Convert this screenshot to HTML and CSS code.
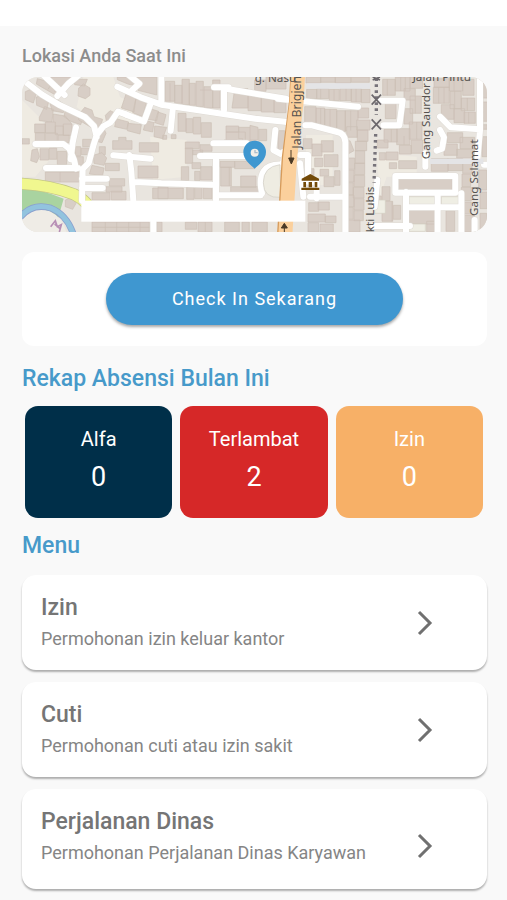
FILE: index.html
```html
<!DOCTYPE html>
<html lang="id">
<head>
  <meta charset="UTF-8">
  <meta name="viewport" content="width=device-width, initial-scale=1.0">
  <title>Absensi</title>
  <link rel="stylesheet" href="styles.css">
</head>
<body>
  <main class="page">
    <h2 class="location-title">Lokasi Anda Saat Ini</h2>

    <svg class="map" viewBox="66 171 1395 465" preserveAspectRatio="xMidYMid slice" role="img" aria-label="Peta lokasi">
      <rect class="land" x="66" y="171" width="1395" height="465"/>

      <!-- residential area and courtyards -->
      <path class="residential" d="M66 171H1461V636H66z"/>
      <path class="yard" d="M250 171h90l20 60 60 30-40 60-90-10-60-50zM450 350l110 10v110l-100 10zM66 240l60 60 40 100-60 70H66zM918 345h80v150h-80zM1130 400l120 10v60h-90l-20 60z"/>
      <path class="park" d="M66 508q60 0 125 28l-20 70-60-30-45 20z"/>

      <!-- buildings, west part -->
      <path class="building" d="M112 176l30 8 45 32-12 14-66-38zM152 171h60l-18 40-36-18zM236 204l14-12 20 12v22l-14 10-22-8zM222 178h40l-8 20-30-4z"/>
      <path class="building" d="M76 215l18-8 14 16-8 26-24-10zM108 232l20-8 20 14-8 30-30-12zM150 250l22-10 22 14-4 24-34-6zM196 268l28 6 26 18-8 22-30-10-20-14zM118 292l16-32 26 8-4 38-38-4zM160 282l36 6 18 22-10 22-44-16z"/>
      <path class="building" d="M104 312h32v26h-32zM136 306h30v32h-30zM166 318h24v26h-24zM190 312h26v34h-26zM106 338h28v28h-28zM136 340h36v26h-36zM174 346h34v22h-34zM66 356h22v16h-22zM96 390l16-4 6 24-8 18-18-6zM120 386h26v34h-26zM148 384h22v34h-22zM172 394h28v40h-28z"/>
      <path class="building" d="M236 284l18-22 22 8 6 20 26 8-8 24-20 4-44-26zM316 286l14-14 14 6-8 24-16 8zM226 380h16v28h-16zM224 410h26v26h-26zM248 358h28v22h-28zM244 384h22v20h-22zM290 330l20-8 8 18-12 28-18-4zM298 380h18v24h-18z"/>
      <path class="building" d="M338 362h18v-10h22v10h18v26h-58zM418 368h58v28h-58zM414 438h60v36h-60zM280 406l26-8 14 16-8 22-30-6zM276 436l36 8-4 22-40-4zM316 430h42v22h-42zM328 476h46v22h-46zM136 456h104v30H136zM318 500h48v16h-48zM276 518h54v22h-54zM334 514h44v26h-44z"/>
      <path class="building" d="M352 171h56v26l-22-4-34-14zM412 171h58v54l-56-14zM378 222l30 10-6 44-38-12zM408 236l32 8-12 46-30-12zM348 296l38 10-6 22-36-8zM384 310l40 4-4 28-38-10zM450 266l26 8-6 28-28-4zM474 276l24 8-8 32-26-8zM438 302l24 6-4 28-28-6zM464 318l36 4-12 34-26-6zM488 346h12v12h-12zM514 344h14v12h-14z"/>
      <path class="building" d="M496 184h28v60h-28zM524 196h22v54h-22zM546 178h22v76h-22zM568 190h18v66h-18zM588 184h22v76h-22zM612 200h26v64h-26zM638 180h22v84h-22z"/>
      <path class="building" d="M534 280h24v54h-24zM558 296h20v42h-20zM580 292h22v50h-22zM604 308h30v44h-30zM556 366h42v20h-42zM556 384h22v46h-22zM600 374h36v20h-36zM578 390h30v14h-30z"/>
      <path class="building" d="M704 206h40v58h-48zM744 212h40v60h-40zM784 224h38v52h-38zM822 230h36v48h-36zM678 318h38v18h-38zM678 336h58v28h-58zM716 322h52v54h-40v-20h-12zM672 360h40v14h-40z"/>
      <path class="building" d="M544 440h22v42h-22zM576 428h26v18h-26zM602 440h34v40h-34zM584 454h16v28h-16zM660 424h44v18h-44zM662 442h32v56h-32zM704 424h60v22h-60zM722 468h46v34h-46zM692 500h90v24h-90z"/>
      <path class="building" d="M458 504h92v32h-92zM474 500h30v36h-30zM560 500h22v38h-22zM584 502h22v34h-22zM610 504h26v32h-26zM196 540l20-8 12 18-10 18-22-8zM276 606h172v30H276zM470 606h16v30h-16zM556 606h34v22h-34zM594 606h42v30h-42zM674 606h44v30h-44zM726 606h22v30h-22zM756 606h46v30h-46z"/>
      <path class="building-line" d="M316 606v30M350 606v30M386 606v30M420 606v30M276 622h172M616 606v30M158 186l-14 22M176 192l-12 24M180 456v30M510 190v54M688 442v56M600 210h56"/>

      <!-- buildings, east part -->
      <g transform="translate(750 0)">
        <path class="building" d="M48 171h60v36H48zM14 180h34v34H14zM168 171h44v18h-44zM212 171h44v16h-44zM256 171h46v18h-46zM304 171h54v16h-54zM170 208h30v28h-30zM200 206h36v30h-36zM238 208h30v34h-30zM270 206h34v36h-34zM304 206h30v40h-30zM334 208h26v40h-26z"/>
        <path class="building" d="M164 260h34v60h-34zM198 264h26v56h-26zM224 268h36v58h-36zM260 272h26v64h-26zM286 272h38v60h-38zM324 264h32v30h-32zM0 316l24 6v38H0zM26 328h24v34H26zM84 332h20v60H84z"/>
        <path class="building" d="M160 356h26v30h-26zM186 372h30v36h-30zM214 362h36v34h-36zM280 370l20-8 12 30-18 10zM194 414h24v26h-24zM222 404h42v36h-42zM210 448h26v20h-26zM222 470h30v30h-30zM254 452h16v44h-16zM170 446h22v20h-22z"/>
        <path class="building" d="M290 320h32v32h-32zM320 300h40v30h-40zM322 330h32v34h-32zM316 364h34v28h-34zM316 392h28v38h-28zM288 414h26v34h-26zM314 430h30v34h-30zM284 450h28v36h-28zM312 466h32v34h-32zM284 488h26v36h-26zM310 502h32v32h-32zM284 526h28v34h-28zM312 536h30v34h-30zM284 562h26v36h-26zM312 572h28v30h-28zM286 600h44v36h-44z"/>
        <path class="building" d="M176 548h30v26h-30zM204 546h34v24h-34zM174 582h52v24h-52zM226 588h32v20h-32zM174 608h32v28h-32zM210 612h40v24h-40z"/>
        <path class="building" d="M398 178h38v48h-38zM436 171h44v42h-44zM480 171h38v34h-38zM406 250h32v46h-32zM462 206h34v34h-34zM480 228h34v52h-34zM462 266h26v46h-26zM478 306h38v52h-38zM440 326h40v48h-40zM402 328h40v38h-40zM382 360h32v24h-32zM408 396h36v24h-36zM448 376h36v26h-36zM484 360h34v40h-34zM418 428h22v18h-22zM446 422h54v24h-54zM388 398h18v22h-18z"/>
        <path class="building" d="M552 176h46v26h-46zM598 171h40v42h-40zM638 178h34v48h-34zM550 202h48v48h-48zM600 214h34v52h-34zM634 234h40v38h-40zM574 254h38v44h-38zM612 266h32v42h-32zM642 276h34v34h-34zM592 338h46v30h-46zM630 352h44v34h-44zM582 372h40v34h-40zM620 388h56v26h-56zM696 190h18v44h-18zM696 246h18v58h-18zM698 314h14v14h-14zM696 350h16v60h-16z"/>
        <path class="building" d="M444 476h162v34H444zM544 416h50v38h-50zM594 416h44v36h-44zM638 420h28v40h-28zM636 462h26v38h-26zM634 502h30v40h-30zM634 546h30v36h-30zM636 586h38v50h-38zM478 570h92v42h-92zM530 604h38v32h-38zM588 572h26v62h-26zM396 500h24v42h-24zM374 528h20v34h-20zM396 544h32v60h-32zM430 556h22v42h-22zM686 450h24v60h-24zM690 516h22v50h-22zM690 580h20v50h-20z"/>
        <path class="courtyard" d="M476 530h78v26h-78zM574 530h52v26h-52zM476 612h50v22h-50zM374 540h32v40h-32z"/>
        <path class="building-line" d="M412 178v48M452 171v42M466 171v42M496 240v40M462 348v26M500 306v52M566 202v48M582 202v48M612 171v42M614 214v52M652 234v38M656 276v34M212 206v30M252 208v34M288 206v36M318 206v40M212 264v56M240 268v58M302 272v60M426 544v60M424 328v38"/>
      </g>

      <!-- river and green verge -->
      <path class="meadow" d="M60 600q40-44 90-26 40 20 50 66H60z"/>
      <path class="river-edge" d="M60 592q36-44 92-28 50 20 70 84"/>
      <path class="river" d="M60 592q36-44 92-28 50 20 70 84"/>
      <path class="mauve" d="M152 620l14-18 6 18 12-6-6 22M164 612l16 14"/>
      <path class="yellow-edge" d="M60 491q90 4 162 32 22 10 40 30"/>
      <path class="yellow-road" d="M60 491q90 4 162 32 22 10 40 30"/>

      <!-- streets: casing first, white fill over it -->
      <defs>
        <g id="streets">
          <path d="M66 178l60 46 54 32 76 36 26 26 8 32M290 345l20-26 22-12 22-32 24 8M352 200l70 32 62 22 122 18 160 24 96 10M290 345l-10 32-14 52-18 18-2 95M484 165v85M388 405l6 50 6 88M404 486l80 4 152 4M648 410v130M460 606v40M246 476h74M246 504h62"/>
          <path d="M172 228l34-38 32-26M130 165l64 60M106 372h84l18 14 14 34 6 26M228 322l-10 46-6 50M138 444h96M378 284l54 20 20-54M386 165l32 26-22 20M518 270l-6 62M340 406l112 10M600 408h150M640 370h100M672 204v66M642 202h44M652 526h130M686 208l172 28"/>
          <path d="M834 236l240 24M916 316h20l76 20q22 4 24 30v270M826 330l-6 60 30 16M1150 316l48 0 10-74h-66M1320 290l32 32 88 6M1320 330l12 22-6 34-16 6M1276 400v40M1440 171v160l-8 90M1452 434h20M1132 480l-8 80M1186 468h180v50h-180zM1218 516v120M1313 520v116M1222 562h160M1384 520v116M1120 618h110M1424 600v40M820 450q40-10 30-54M786 520q-20-90 60-86M900 430l10 100M930 530h104M900 405h24v80h26v50"/>
        </g>
      </defs>
      <use class="street-casing" href="#streets"/>
      <use class="street" href="#streets"/>
      <path class="oval" d="M840 434q-50 6-50 54t52 44z"/>
      <path class="lane" d="M920 198h190M1290 424h160"/>

      <!-- main road -->
      <path class="main-road-edge" d="M892 165l-4 80-22 170-14 230"/>
      <path class="main-road" d="M894 165l-4 80-20 170-14 230"/>

      <!-- railway -->
      <path class="dots" d="M1129 175v110M1127 342l-5 146"/>
      <path class="crossing" d="M1115 224l28 30m0-30l-28 30M1115 298l28 30m0-30l-28 30M1118 171l22 9m0-9l-22 9"/>

      <path class="arrow" d="M873 390v26M866 414h16l-8 18zM853 610l9 14h-18zM853 620v16"/>

      <!-- museum -->
      <path class="museum" d="M905 476l26-14 26 14v6h-52zM910 486h8v16h-8zM926 486h10v16h-10zM944 486h8v16h-8zM904 503h54v7h-54z"/>

      <g class="street-name">
        <text x="764" y="186">g. Nasu</text>
        <text x="1238" y="184">Jalan Pintu</text>
        <text class="street-name-large" transform="translate(904 386) rotate(-90)">Jalan Brigjen</text>
        <text transform="translate(1122 500) rotate(-90)" text-anchor="end">Bakti Lubis</text>
        <text transform="translate(1291 418) rotate(-90)">Gang Saurdor</text>
        <text transform="translate(1434 588) rotate(-90)">Gang Selamat</text>
      </g>

      <!-- blank label strip -->
      <rect class="strip" x="244" y="542" width="672" height="63"/>

      <path class="pin" d="M764 446c-11-10-34-26-34-50a34 34 0 0 1 68 0c0 24-23 40-34 50z"/>
      <circle class="pin-hole" cx="764" cy="398" r="12"/>
      <path class="pin-mark" d="M765 390v8h8"/>
    </svg>

    <section class="checkin">
      <button type="button" class="checkin-button">Check In Sekarang</button>
    </section>

    <h2 class="section-title">Rekap Absensi Bulan Ini</h2>
    <div class="recap">
      <div class="tile tile-alfa">
        <span class="tile-label">Alfa</span>
        <span class="tile-value">0</span>
      </div>
      <div class="tile tile-late">
        <span class="tile-label">Terlambat</span>
        <span class="tile-value">2</span>
      </div>
      <div class="tile tile-izin">
        <span class="tile-label">Izin</span>
        <span class="tile-value">0</span>
      </div>
    </div>

    <h2 class="section-title">Menu</h2>
    <nav class="menu">
      <a href="#izin" class="menu-card">
        <span class="menu-text">
          <span class="menu-title">Izin</span>
          <span class="menu-desc">Permohonan izin keluar kantor</span>
        </span>
        <svg class="chevron" viewBox="0 0 16 26" aria-hidden="true"><path d="M2 2l11 11L2 24"/></svg>
      </a>
      <a href="#cuti" class="menu-card">
        <span class="menu-text">
          <span class="menu-title">Cuti</span>
          <span class="menu-desc">Permohonan cuti atau izin sakit</span>
        </span>
        <svg class="chevron" viewBox="0 0 16 26" aria-hidden="true"><path d="M2 2l11 11L2 24"/></svg>
      </a>
      <a href="#dinas" class="menu-card menu-card-tall">
        <span class="menu-text">
          <span class="menu-title">Perjalanan Dinas</span>
          <span class="menu-desc">Permohonan Perjalanan Dinas Karyawan</span>
        </span>
        <svg class="chevron" viewBox="0 0 16 26" aria-hidden="true"><path d="M2 2l11 11L2 24"/></svg>
      </a>
    </nav>
  </main>
</body>
</html>
```

FILE: styles.css
```css
* {
  box-sizing: border-box;
}
body {
  margin: 0;
  background-color: #f9f9f9;
  border-top: 26px solid #fff;
  font-family: Roboto, "Liberation Sans", sans-serif;
  color: #757575;
}
.page {
  padding: 18px 20px 10px 22px;
}
h2 {
  margin: 0;
}
.location-title {
  font-size: 18px;
  line-height: 24px;
  font-weight: 500;
  color: #8c8c8c;
  margin-bottom: 9px;
}

/* map */
.map {
  display: block;
  width: 100%;
  aspect-ratio: 3 / 1;
  border-radius: 16px;
}
.land {
  fill: #f2efe9;
}
.residential {
  fill: #e9e5df;
}
.yard {
  fill: #efebe2;
}
.park {
  fill: #a9d3a0;
}
.meadow {
  fill: #efece6;
}
.building {
  fill: #d8cec6;
  stroke: #cbbfb5;
  stroke-width: 2;
}
.building-line {
  fill: none;
  stroke: #cbbfb5;
  stroke-width: 2;
}
.courtyard {
  fill: #efeee4;
  stroke: #d3d0c3;
  stroke-width: 2;
}
.river, .river-edge, .yellow-road, .yellow-edge, .main-road, .main-road-edge, .lane, .dots, .crossing, .mauve {
  fill: none;
}
.river-edge {
  stroke: #8aa0cf;
  stroke-width: 20;
}
.river {
  stroke: #92c3de;
  stroke-width: 15;
}
.mauve {
  stroke: #b78fb5;
  stroke-width: 5;
}
.yellow-edge {
  stroke: #c3c684;
  stroke-width: 36;
}
.yellow-road {
  stroke: #f0f78f;
  stroke-width: 32;
}
.street-casing, .street {
  fill: none;
  stroke-linecap: round;
  stroke-linejoin: round;
}
.street-casing {
  stroke: #dfdbd5;
  stroke-width: 21;
}
.street {
  stroke: #fff;
  stroke-width: 18;
}
.oval {
  fill: #eeece2;
  stroke: #cfccc2;
  stroke-width: 2;
}
.lane {
  stroke: #e4e4e6;
  stroke-width: 16;
}
.main-road-edge {
  stroke: #d69b5b;
  stroke-width: 42;
}
.main-road {
  stroke: #fbd09c;
  stroke-width: 42;
}
.dots {
  stroke: #77737a;
  stroke-width: 10;
  stroke-dasharray: 8 10;
}
.crossing {
  stroke: #6c686c;
  stroke-width: 5;
}
.arrow {
  fill: #4b3a26;
  stroke: #4b3a26;
  stroke-width: 3;
}
.museum {
  fill: #734a08;
}
.street-name {
  font-family: "Noto Sans", sans-serif;
  font-size: 35px;
  fill: #55524f;
}
.street-name-large {
  font-size: 37px;
}
.strip {
  fill: #fff;
}
.pin {
  fill: #3f97d0;
}
.pin-hole {
  fill: #f2efe9;
}
.pin-mark {
  fill: none;
  stroke: #a9bccb;
  stroke-width: 4;
}

/* check in */
.checkin {
  display: flex;
  justify-content: center;
  margin-top: 20px;
  padding: 21px;
  background-color: #fff;
  border-radius: 12px;
}
.checkin-button {
  width: 70%;
  height: 52px;
  padding: 0 0 2px;
  border: 0;
  border-radius: 26px;
  background-color: #3f97d0;
  color: #fff;
  font-family: inherit;
  font-size: 18px;
  letter-spacing: 1px;
  box-shadow: 0 2px 3px rgba(0, 0, 0, 0.35);
  cursor: pointer;
}

/* recap */
.section-title {
  font-size: 23px;
  line-height: 32px;
  font-weight: 500;
  color: #479aca;
}
.checkin + .section-title {
  margin-top: 17px;
}
.recap {
  display: grid;
  grid-template-columns: repeat(3, 1fr);
  gap: 8px;
  padding: 11px 4px 12px 3px;
}
.tile {
  display: flex;
  flex-direction: column;
  align-items: center;
  height: 112px;
  padding-top: 20px;
  border-radius: 13px;
  color: #fff;
}
.tile-alfa {
  background-color: #002f49;
}
.tile-late {
  background-color: #d62828;
}
.tile-izin {
  background-color: #f7b067;
}
.tile-label {
  font-size: 20px;
  line-height: 26px;
}
.tile-value {
  font-size: 27px;
  line-height: 50px;
}

/* menu */
.menu {
  display: flex;
  flex-direction: column;
  gap: 12px;
  margin-top: 13px;
}
.menu-card {
  display: flex;
  align-items: center;
  justify-content: space-between;
  min-height: 95px;
  padding: 0 54px 0 19px;
  border-radius: 14px;
  background-color: #fff;
  color: inherit;
  text-decoration: none;
  box-shadow: 0 2px 2px rgba(0, 0, 0, 0.3);
}
.menu-card-tall {
  min-height: 100px;
}
.menu-card-tall .menu-text {
  padding-bottom: 4px;
}
.menu-card-tall .chevron {
  margin-top: 14px;
}
.menu-title, .menu-desc {
  display: block;
  line-height: 31px;
}
.menu-title {
  font-size: 23px;
  font-weight: 500;
}
.menu-desc {
  font-size: 18px;
  color: #858585;
}
.chevron {
  flex: none;
  width: 16px;
  height: 26px;
  fill: none;
  stroke: #707070;
  stroke-width: 3;
}
```
